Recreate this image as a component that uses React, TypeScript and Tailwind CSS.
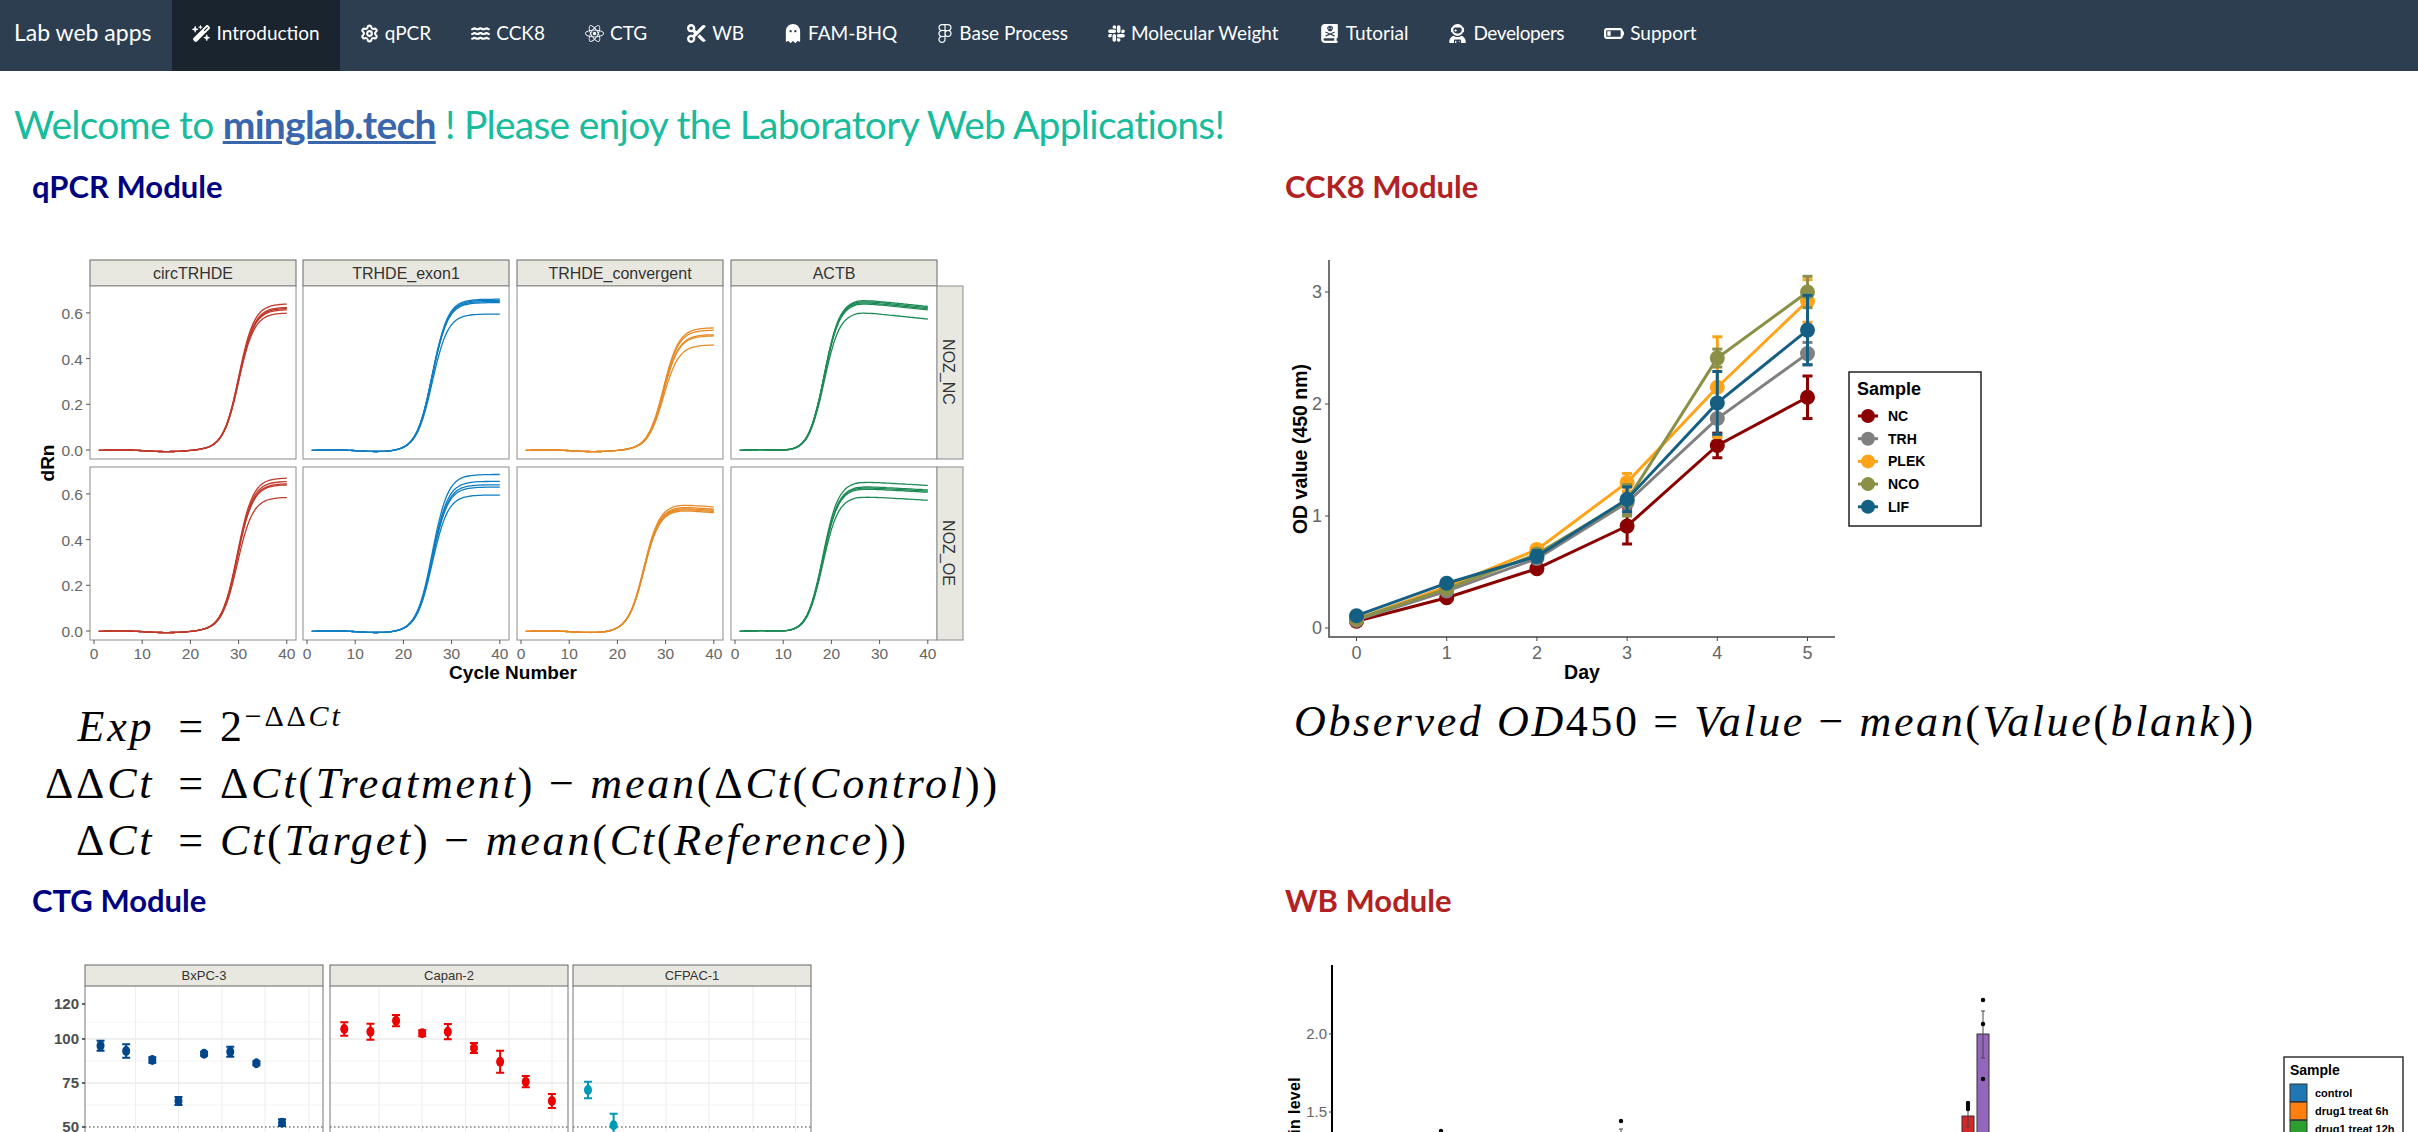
import React from 'react';
import {
  FaWandMagicSparkles,
  FaWater,
  FaReact,
  FaScissors,
  FaGhost,
  FaFigma,
  FaSlack,
  FaBookSkull,
  FaUserAstronaut,
  FaBatteryQuarter,
} from 'react-icons/fa6';
import { Settings } from 'lucide-react';

const SANS = '"Liberation Sans", Arial, sans-serif';

const navItems = [
  { label: 'Introduction', Icon: FaWandMagicSparkles, iconClass: 'w-[19px]', active: true },
  { label: 'qPCR', Icon: Settings, iconClass: 'w-[19px]' },
  { label: 'CCK8', Icon: FaWater, iconClass: 'w-[19px]' },
  { label: 'CTG', Icon: FaReact, iconClass: 'w-[19px]' },
  { label: 'WB', Icon: FaScissors, iconClass: 'w-[19px]' },
  { label: 'FAM-BHQ', Icon: FaGhost, iconClass: 'w-[18px]' },
  { label: 'Base Process', Icon: FaFigma, iconClass: 'w-[16px]' },
  { label: 'Molecular Weight', Icon: FaSlack, iconClass: 'w-[17px]' },
  { label: 'Tutorial', Icon: FaBookSkull, iconClass: 'w-[21px]' },
  { label: 'Developers', Icon: FaUserAstronaut, iconClass: 'w-[19px]', textClass: 'tracking-[-0.4px]' },
  { label: 'Support', Icon: FaBatteryQuarter, iconClass: 'w-[20px]' },
];

function Navbar() {
  return (
    <nav className="flex h-[71px] items-stretch bg-[#2c3e50] text-white">
      <div className="flex items-center pb-[6px] pl-[14px] pr-[20px] text-[23px]">Lab web apps</div>
      {navItems.map(({ label, Icon, iconClass, textClass, active }) => (
        <div
          key={label}
          className={`flex items-center gap-[6px] px-[20px] pb-[5px] text-[19px] ${active ? 'bg-[#1a242f]' : ''}`}
        >
          <Icon className={`h-[19px] ${iconClass}`} strokeWidth={Icon === Settings ? 2.6 : undefined} />
          <span className={textClass}>{label}</span>
        </div>
      ))}
    </nav>
  );
}

// ---- qPCR amplification curves

type Curve = { mid: number; plats: number[]; fall?: number };

const qpcrRows: Curve[][] = [
  [
    { mid: 30, plats: [0.6, 0.615, 0.62, 0.625, 0.64] },
    { mid: 26, plats: [0.595, 0.645, 0.65, 0.655, 0.66] },
    { mid: 29.5, plats: [0.46, 0.5, 0.505, 0.525, 0.535] },
    { mid: 18.5, plats: [0.605, 0.645, 0.65, 0.655, 0.66], fall: 0.0022 },
  ],
  [
    { mid: 29.7, plats: [0.585, 0.64, 0.645, 0.655, 0.67] },
    { mid: 26, plats: [0.595, 0.63, 0.64, 0.655, 0.685] },
    { mid: 25.5, plats: [0.53, 0.535, 0.54, 0.545, 0.555], fall: 0.0016 },
    { mid: 18.2, plats: [0.59, 0.625, 0.63, 0.635, 0.655], fall: 0.0012 },
  ],
];

const panelX = [90, 303, 517, 731];
const panelColor = ['#c0392b', '#0f7dc2', '#e78a26', '#1e8a55'];
const stripLabels = ['circTRHDE', 'TRHDE_exon1', 'TRHDE_convergent', 'ACTB'];
const rowTop = [286, 467];
const rowZero = [450, 631];

function curvePath(c: Curve, plat: number, left: number, zero: number) {
  let d = '';
  for (let x = 1; x <= 40; x += 0.5) {
    const s = 1 / (1 + Math.exp(-(x - c.mid) * 0.62));
    const wobble = 0.004 * Math.sin(x / 3.2) * (1 - s) - 0.003 * (1 - s);
    const down = c.fall ? c.fall * Math.max(0, x - c.mid - 7) : 0;
    const v = plat * s + wobble - down;
    const px = left + 4 + x * 4.82;
    const py = zero - v * 228.5;
    d += `${d ? 'L' : 'M'}${px.toFixed(1)} ${py.toFixed(1)}`;
  }
  return d;
}

function QpcrChart() {
  return (
    <svg viewBox="0 205 980 485" className="h-[485px] w-[980px]" style={{ fontFamily: SANS }}>
      {panelX.map((x, i) => (
        <g key={x}>
          <rect x={x} y={260} width={206} height={26} fill="#e8e8e0" stroke="#666" strokeWidth={1} />
          <text x={x + 103} y={279} textAnchor="middle" fontSize={16} fill="#333">
            {stripLabels[i]}
          </text>
        </g>
      ))}
      {rowTop.map((top, r) => (
        <g key={top}>
          {panelX.map((x, i) => (
            <g key={x}>
              <rect x={x} y={top} width={206} height={173} fill="#fff" stroke="#8c8c8c" strokeWidth={1} />
              {qpcrRows[r][i].plats.map((p) => (
                <path
                  key={p}
                  d={curvePath(qpcrRows[r][i], p, x, rowZero[r])}
                  fill="none"
                  stroke={panelColor[i]}
                  strokeWidth={1.3}
                />
              ))}
            </g>
          ))}
          <rect x={937} y={top} width={26} height={173} fill="#e8e8e0" stroke="#8c8c8c" strokeWidth={1} />
          <text
            transform={`translate(943 ${top + 86}) rotate(90)`}
            textAnchor="middle"
            fontSize={16}
            fill="#333"
          >
            {r === 0 ? 'NOZ_NC' : 'NOZ_OE'}
          </text>
          {[0, 0.2, 0.4, 0.6].map((v) => (
            <g key={v}>
              <line
                x1={86}
                x2={90}
                y1={rowZero[r] - v * 228.5}
                y2={rowZero[r] - v * 228.5}
                stroke="#555"
              />
              <text
                x={83}
                y={rowZero[r] - v * 228.5 + 6}
                textAnchor="end"
                fontSize={15.5}
                fill="#666"
              >
                {v.toFixed(1)}
              </text>
            </g>
          ))}
        </g>
      ))}
      {panelX.map((x) =>
        [0, 10, 20, 30, 40].map((t) => (
          <g key={`${x}-${t}`}>
            <line x1={x + 4 + t * 4.82} x2={x + 4 + t * 4.82} y1={640} y2={644} stroke="#555" />
            <text x={x + 4 + t * 4.82} y={659} textAnchor="middle" fontSize={15.5} fill="#666">
              {t}
            </text>
          </g>
        )),
      )}
      <text transform="translate(54 463) rotate(-90)" textAnchor="middle" fontSize={19} fontWeight={700} fill="#000">
        dRn
      </text>
      <text x={513} y={679} textAnchor="middle" fontSize={19} fontWeight={700} fill="#000">
        Cycle Number
      </text>
    </svg>
  );
}

// ---- CCK8 growth curves

const cckSeries = [
  { name: 'NC', color: '#8b0000', values: [0.06, 0.27, 0.53, 0.91, 1.63, 2.06], err: [0.01, 0.02, 0.02, 0.16, 0.11, 0.19] },
  { name: 'TRH', color: '#808080', values: [0.07, 0.33, 0.62, 1.12, 1.87, 2.45], err: [0.01, 0.02, 0.03, 0.1, 0.16, 0.1] },
  { name: 'PLEK', color: '#ffa319', values: [0.08, 0.37, 0.7, 1.3, 2.15, 2.92], err: [0.01, 0.02, 0.04, 0.08, 0.45, 0.19] },
  { name: 'NCO', color: '#8a9045', values: [0.08, 0.35, 0.66, 1.14, 2.41, 3.0], err: [0.01, 0.02, 0.04, 0.14, 0.08, 0.14] },
  { name: 'LIF', color: '#155f83', values: [0.11, 0.4, 0.64, 1.15, 2.01, 2.66], err: [0.01, 0.02, 0.05, 0.11, 0.28, 0.31] },
];

const cckX = (d: number) => 1356.5 + d * 90.2;
const cckY = (v: number) => 628 - v * 112;

function CckChart() {
  return (
    <svg viewBox="1285 205 720 485" className="h-[485px] w-[720px]" style={{ fontFamily: SANS }}>
      {cckSeries.map((s) => (
        <g key={s.name}>
          {s.values.map((v, d) => (
            <g key={d} stroke={s.color} strokeWidth={3}>
              <line x1={cckX(d)} x2={cckX(d)} y1={cckY(v - s.err[d])} y2={cckY(v + s.err[d])} />
              <line x1={cckX(d) - 5} x2={cckX(d) + 5} y1={cckY(v - s.err[d])} y2={cckY(v - s.err[d])} />
              <line x1={cckX(d) - 5} x2={cckX(d) + 5} y1={cckY(v + s.err[d])} y2={cckY(v + s.err[d])} />
            </g>
          ))}
          <polyline
            points={s.values.map((v, d) => `${cckX(d)},${cckY(v)}`).join(' ')}
            fill="none"
            stroke={s.color}
            strokeWidth={3}
          />
          {s.values.map((v, d) => (
            <circle key={d} cx={cckX(d)} cy={cckY(v)} r={7.5} fill={s.color} />
          ))}
        </g>
      ))}
      <path d="M1329 260V637H1835" fill="none" stroke="#444" strokeWidth={1.5} />
      {[0, 1, 2, 3].map((v) => (
        <g key={v}>
          <line x1={1325} x2={1329} y1={cckY(v)} y2={cckY(v)} stroke="#444" />
          <text x={1322} y={cckY(v) + 6} textAnchor="end" fontSize={18} fill="#666">
            {v}
          </text>
        </g>
      ))}
      {[0, 1, 2, 3, 4, 5].map((d) => (
        <g key={d}>
          <line x1={cckX(d)} x2={cckX(d)} y1={637} y2={641} stroke="#444" />
          <text x={cckX(d)} y={659} textAnchor="middle" fontSize={18} fill="#666">
            {d}
          </text>
        </g>
      ))}
      <text transform="translate(1307 449) rotate(-90)" textAnchor="middle" fontSize={19.5} fontWeight={700} fill="#000">
        OD value (450 nm)
      </text>
      <text x={1582} y={679} textAnchor="middle" fontSize={19.5} fontWeight={700} fill="#000">
        Day
      </text>
      <rect x={1849} y={372} width={132} height={154} fill="#fff" stroke="#222" strokeWidth={1.5} />
      <text x={1857} y={395} fontSize={18} fontWeight={700} fill="#000">
        Sample
      </text>
      {cckSeries.map((s, i) => (
        <g key={s.name}>
          <line x1={1858} x2={1878} y1={416 + i * 22.7} y2={416 + i * 22.7} stroke={s.color} strokeWidth={3} />
          <circle cx={1868} cy={416 + i * 22.7} r={7} fill={s.color} />
          <text x={1888} y={421 + i * 22.7} fontSize={14} fontWeight={700} fill="#000">
            {s.name}
          </text>
        </g>
      ))}
    </svg>
  );
}

// ---- CTG dose response, cut off by the window

const ctgPanels = [
  {
    name: 'BxPC-3',
    x: 85,
    color: '#00468b',
    grid: [135.6, 178.5, 222, 265, 309],
    points: [[154, 287, 15], [203, 303, 20], [253, 330, 8], [303, 453, 12], [352, 311, 6], [402, 305, 15], [452, 340, 6], [501, 518, 10]],
  },
  {
    name: 'Capan-2',
    x: 330,
    color: '#ed0000',
    grid: [379, 422, 465.6, 509, 552],
    points: [[620, 237, 20], [670, 245, 24], [719, 212, 17], [769, 250, 9], [818, 245, 23], [868, 294, 15], [918, 335, 33], [967, 395, 17], [1017, 453, 21]],
  },
  {
    name: 'CFPAC-1',
    x: 573,
    color: '#0099b4',
    grid: [623, 666, 709, 753, 795.6],
    points: [[1086, 420, 25], [1135, 526, 35]],
  },
];

function CtgChart() {
  return (
    <svg viewBox="0 919 830 213" className="h-[213px] w-[830px]" style={{ fontFamily: SANS }}>
      {ctgPanels.map((p) => (
        <g key={p.name}>
          {[1022, 1061, 1105].map((y) => (
            <line key={y} x1={p.x} x2={p.x + 238} y1={y} y2={y} stroke="#f3f3f3" />
          ))}
          {[1039, 1083].map((y) => (
            <line key={y} x1={p.x} x2={p.x + 238} y1={y} y2={y} stroke="#ebebeb" strokeWidth={1.5} />
          ))}
          {p.grid.map((x) => (
            <line key={x} x1={x} x2={x} y1={986} y2={1132} stroke="#ededed" />
          ))}
          <line x1={p.x} x2={p.x + 238} y1={1127} y2={1127} stroke="#333" strokeDasharray="1.5 2.5" />
          <rect x={p.x} y={965} width={238} height={21} fill="#e8e8e0" stroke="#666" />
          <text x={p.x + 119} y={980} textAnchor="middle" fontSize={13} fill="#333">
            {p.name}
          </text>
          <path d={`M${p.x} 986V1132M${p.x + 238} 986V1132`} fill="none" stroke="#777" />
          {p.points.map(([px, py, e]) => {
            const cx = 20 + px / 1.912;
            const cy = 950 + py / 3;
            const h = e / 3;
            return (
              <g key={px} stroke={p.color} strokeWidth={2}>
                <path d={`M${cx} ${cy - h}V${cy + h}M${cx - 4} ${cy - h}H${cx + 4}M${cx - 4} ${cy + h}H${cx + 4}`} fill="none" />
                <ellipse cx={cx} cy={cy} rx={4} ry={5} fill={p.color} stroke="none" />
              </g>
            );
          })}
        </g>
      ))}
      {[
        [120, 1004],
        [100, 1039],
        [75, 1083],
        [50, 1127],
      ].map(([label, y]) => (
        <g key={label}>
          <line x1={82} x2={85} y1={y} y2={y} stroke="#333" strokeWidth={1.5} />
          <text x={79} y={y + 5} textAnchor="end" fontSize={15} fontWeight={700} fill="#4d4d4d">
            {label}
          </text>
        </g>
      ))}
    </svg>
  );
}

// ---- WB bars, only the top of the plot is in the window

function WbChart() {
  const wbLegend = [
    { label: 'control', color: '#1f77b4' },
    { label: 'drug1 treat 6h', color: '#ff7f0e' },
    { label: 'drug1 treat 12h', color: '#2ca02c' },
  ];
  return (
    <svg viewBox="1285 919 1133 213" className="h-[213px] w-[1133px]" style={{ fontFamily: SANS }}>
      <line x1={1332} x2={1332} y1={965} y2={1132} stroke="#000" strokeWidth={2} />
      {[
        ['2.0', 1034],
        ['1.5', 1112],
      ].map(([label, y]) => (
        <g key={label}>
          <line x1={1329} x2={1332} y1={y} y2={y} stroke="#333" />
          <text x={1327} y={Number(y) + 5} textAnchor="end" fontSize={15} fill="#666">
            {label}
          </text>
        </g>
      ))}
      <text
        transform="translate(1300 1077) rotate(-90)"
        textAnchor="end"
        fontSize={16}
        fontWeight={700}
        letterSpacing={0.3}
        fill="#000"
      >
        Protein level
      </text>
      <rect x={1962} y={1116} width={12} height={20} fill="#d62728" stroke="#333" />
      <rect x={1977} y={1034} width={12} height={100} fill="#9467bd" stroke="#333" />
      <path d="M1983 1011V1058M1981 1011H1985M1981 1058H1985M1968 1105V1127M1966 1127H1970M1621 1129V1132M1619 1129H1623" stroke="#444" fill="none" />
      {[
        [1983, 1000],
        [1983, 1024],
        [1983, 1079],
        [1968, 1103],
        [1968, 1106],
        [1968, 1109],
        [1621, 1121],
        [1441, 1131],
      ].map(([x, y]) => (
        <circle key={`${x}-${y}`} cx={x} cy={y} r={2.2} fill="#000" />
      ))}
      <rect x={2284} y={1057} width={119} height={80} fill="#fff" stroke="#333" strokeWidth={1.5} />
      <text x={2290} y={1075} fontSize={14} fontWeight={700} fill="#000">
        Sample
      </text>
      {wbLegend.map((l, i) => (
        <g key={l.label}>
          <rect x={2290} y={1084 + i * 18.2} width={17} height={17.5} fill={l.color} stroke="#333" />
          <text x={2315} y={1097 + i * 18.2} fontSize={11} fontWeight={700} fill="#000">
            {l.label}
          </text>
        </g>
      ))}
    </svg>
  );
}

// ---- formulas

function Formula({ lhs, rhs }: { lhs: React.ReactNode; rhs: React.ReactNode }) {
  return (
    <>
      <div className="pr-[9px] text-right">{lhs}</div>
      <div className="px-[12px]">=</div>
      <div>{rhs}</div>
    </>
  );
}

function Upright({ children }: { children: React.ReactNode }) {
  return <span className="not-italic">{children}</span>;
}

const MATH = 'font-["Liberation_Serif",serif] text-[44px] italic text-black whitespace-nowrap';

function QpcrFormula() {
  return (
    <div className={`ml-[45px] grid h-[179px] w-fit grid-cols-[auto_auto_auto] pt-[8px] leading-[57px] tracking-[2.8px] ${MATH}`}>
      <Formula
        lhs="Exp"
        rhs={
          <>
            <Upright>2</Upright>
            <sup className="text-[30px]">
              <Upright>−ΔΔ</Upright>Ct
            </sup>
          </>
        }
      />
      <Formula
        lhs={
          <>
            <Upright>ΔΔ</Upright>Ct
          </>
        }
        rhs={
          <>
            <Upright>Δ</Upright>Ct<Upright>(</Upright>Treatment<Upright>) − </Upright>mean<Upright>(Δ</Upright>Ct
            <Upright>(</Upright>Control<Upright>))</Upright>
          </>
        }
      />
      <Formula
        lhs={
          <>
            <Upright>Δ</Upright>Ct
          </>
        }
        rhs={
          <>
            Ct<Upright>(</Upright>Target<Upright>) − </Upright>mean<Upright>(</Upright>Ct<Upright>(</Upright>Reference
            <Upright>))</Upright>
          </>
        }
      />
    </div>
  );
}

function CckFormula() {
  return (
    <div className={`ml-[41px] h-[179px] pt-[3px] leading-[57px] tracking-[2.6px] ${MATH}`}>
      Observed OD<Upright>450 = </Upright>Value<Upright> − </Upright>mean<Upright>(</Upright>Value
      <Upright>(</Upright>blank<Upright>))</Upright>
    </div>
  );
}

function ModuleTitle({ children, red }: { children: React.ReactNode; red?: boolean }) {
  return (
    <h3 className={`text-[31px] font-bold leading-[37px] ${red ? 'text-[#b22222]' : 'text-[#000080]'}`}>{children}</h3>
  );
}

export default function App() {
  return (
    <div className="h-[1132px] w-[2418px] overflow-hidden bg-white font-['Lato',sans-serif]">
      <Navbar />
      <h2 className="pl-[14px] pt-[30px] text-[39px] leading-[47px] tracking-[-0.75px] text-[#18bc9c]">
        Welcome to{' '}
        <a className="font-bold text-[#3a66ad] underline" href="#">
          minglab.tech
        </a>{' '}
        ! Please enjoy the Laboratory Web Applications!
      </h2>
      <div className="grid grid-cols-[1253px_1165px]">
        <div>
          <div className="pl-[32px] pt-[20px]">
            <ModuleTitle>qPCR Module</ModuleTitle>
          </div>
          <QpcrChart />
          <QpcrFormula />
        </div>
        <div>
          <div className="pl-[32px] pt-[20px]">
            <ModuleTitle red>CCK8 Module</ModuleTitle>
          </div>
          <div className="pl-[32px]">
            <CckChart />
          </div>
          <CckFormula />
        </div>
        <div>
          <div className="pl-[32px] pt-[13px]">
            <ModuleTitle>CTG Module</ModuleTitle>
          </div>
          <CtgChart />
        </div>
        <div>
          <div className="pl-[32px] pt-[13px]">
            <ModuleTitle red>WB Module</ModuleTitle>
          </div>
          <div className="pl-[32px]">
            <WbChart />
          </div>
        </div>
      </div>
    </div>
  );
}
